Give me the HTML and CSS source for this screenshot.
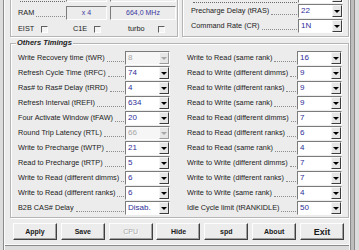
FILE: index.html
```html
<!DOCTYPE html>
<html>
<head>
<meta charset="utf-8">
<link rel="stylesheet" href="styles.css">
</head>
<body>
<div class="window">
  <div class="client">
    <div class="top">
      <div class="group gl">
        <div class="frow"><span class="lbl"></span><span class="dots cut"></span><span class="field"></span><span class="field wide"></span></div>
        <div class="frow"><span class="lbl">RAM</span><span class="dots"></span><span class="field">x 4</span><span class="field wide">664,0 MHz</span></div>
        <div class="checks">
          <div class="chkitem"><span class="lbl w1">EIST</span><span class="chk"></span></div>
          <div class="chkitem"><span class="lbl w2">C1E</span><span class="chk"></span></div>
          <div class="chkitem"><span class="lbl w3">turbo</span><span class="chk"></span></div>
        </div>
      </div>
      <div class="group gr">
        <div class="crow"><span class="lbl"></span><span class="dots cut"></span><div class="combo"><span class="val"></span><span class="btn"></span></div></div>
        <div class="crow"><span class="lbl">Precharge Delay (tRAS)</span><span class="dots"></span><div class="combo"><span class="val">22</span><span class="btn"></span></div></div>
        <div class="crow"><span class="lbl">Command Rate (CR)</span><span class="dots"></span><div class="combo"><span class="val">1N</span><span class="btn"></span></div></div>
      </div>
    </div>

    <fieldset class="others">
      <legend>Others Timings</legend>
      <div class="grid">
        <div class="crow"><span class="lbl">Write Recovery time (tWR)</span><span class="dots"></span><div class="combo dis"><span class="val">8</span><span class="btn"></span></div></div>
        <div class="crow"><span class="lbl">Refresh Cycle Time (tRFC)</span><span class="dots"></span><div class="combo"><span class="val">74</span><span class="btn"></span></div></div>
        <div class="crow"><span class="lbl">Ras# to Ras# Delay (tRRD)</span><span class="dots"></span><div class="combo"><span class="val">4</span><span class="btn"></span></div></div>
        <div class="crow"><span class="lbl">Refresh Interval (tREFI)</span><span class="dots"></span><div class="combo"><span class="val">634</span><span class="btn"></span></div></div>
        <div class="crow"><span class="lbl">Four Activate Window (tFAW)</span><span class="dots"></span><div class="combo"><span class="val">20</span><span class="btn"></span></div></div>
        <div class="crow"><span class="lbl">Round Trip Latency (RTL)</span><span class="dots"></span><div class="combo dis"><span class="val">66</span><span class="btn"></span></div></div>
        <div class="crow"><span class="lbl">Write to Precharge (tWTP)</span><span class="dots"></span><div class="combo"><span class="val">21</span><span class="btn"></span></div></div>
        <div class="crow"><span class="lbl">Read to Precharge (tRTP)</span><span class="dots"></span><div class="combo"><span class="val">5</span><span class="btn"></span></div></div>
        <div class="crow"><span class="lbl">Write to Read (different dimms)</span><span class="dots"></span><div class="combo"><span class="val">6</span><span class="btn"></span></div></div>
        <div class="crow"><span class="lbl">Write to Read (different ranks)</span><span class="dots"></span><div class="combo"><span class="val">6</span><span class="btn"></span></div></div>
        <div class="crow"><span class="lbl">B2B CAS# Delay</span><span class="dots"></span><div class="combo"><span class="val">Disab.</span><span class="btn"></span></div></div>

        <div class="crow"><span class="lbl">Write to Read (same rank)</span><span class="dots"></span><div class="combo"><span class="val">16</span><span class="btn"></span></div></div>
        <div class="crow"><span class="lbl">Read to Write (different dimms)</span><span class="dots"></span><div class="combo"><span class="val">9</span><span class="btn"></span></div></div>
        <div class="crow"><span class="lbl">Read to Write (different ranks)</span><span class="dots"></span><div class="combo"><span class="val">9</span><span class="btn"></span></div></div>
        <div class="crow"><span class="lbl">Read to Write (same rank)</span><span class="dots"></span><div class="combo"><span class="val">9</span><span class="btn"></span></div></div>
        <div class="crow"><span class="lbl">Read to Read (different dimms)</span><span class="dots"></span><div class="combo"><span class="val">7</span><span class="btn"></span></div></div>
        <div class="crow"><span class="lbl">Read to Read (different ranks)</span><span class="dots"></span><div class="combo"><span class="val">6</span><span class="btn"></span></div></div>
        <div class="crow"><span class="lbl">Read to Read (same rank)</span><span class="dots"></span><div class="combo"><span class="val">4</span><span class="btn"></span></div></div>
        <div class="crow"><span class="lbl">Write to Write (different dimms)</span><span class="dots"></span><div class="combo"><span class="val">7</span><span class="btn"></span></div></div>
        <div class="crow"><span class="lbl">Write to Write (different ranks)</span><span class="dots"></span><div class="combo"><span class="val">7</span><span class="btn"></span></div></div>
        <div class="crow"><span class="lbl">Write to Write (same rank)</span><span class="dots"></span><div class="combo"><span class="val">4</span><span class="btn"></span></div></div>
        <div class="crow"><span class="lbl">Idle Cycle limit (tRANKIDLE)</span><span class="dots"></span><div class="combo"><span class="val">50</span><span class="btn"></span></div></div>
      </div>
    </fieldset>

    <div class="buttons">
      <button class="b">Apply</button>
      <button class="b">Save</button>
      <button class="b off">CPU</button>
      <button class="b">Hide</button>
      <button class="b">spd</button>
      <button class="b">About</button>
      <button class="b big">Exit</button>
    </div>
  </div>
</div>
</body>
</html>
```

FILE: styles.css
```css
html, body {
  margin: 0;
  padding: 0;
  background: #ececec;
}

.window {
  width: 359px;
  height: 250px;
  overflow: hidden;
  background: #ececec;
  font-family: "Liberation Sans", Arial, sans-serif;
  color: #222;
  box-shadow:
    inset 3px 0 0 #dcdcdc,
    inset 4px 0 0 #8a8a8a,
    inset 5px 0 0 #fafafa,
    inset -4px 0 0 #dcdcdc,
    inset -5px 0 0 #8a8a8a,
    inset -8px 0 0 #bdbdbd,
    inset -9px 0 0 #8a8a8a,
    inset -10px 0 0 #fafafa,
    inset 0 -4px 0 #dcdcdc,
    inset 0 -5px 0 #8a8a8a,
    inset 0 -6px 0 #fafafa;
}

.client {
  padding-left: 10px;
}

/* ---- group boxes ---- */
.group {
  box-sizing: border-box;
  border: 1px solid #b5b5b5;
  box-shadow: inset 1px 1px 0 #fff, 1px 1px 0 #fff;
}

.top {
  display: flex;
  gap: 4px;
  margin-top: -20px;
}

.gl {
  width: 168px;
  height: 57px;
  padding: 7px 1px 2px 7px;
  display: flex;
  flex-direction: column;
  gap: 4px;
}

.gr {
  width: 167px;
  height: 57px;
  padding: 8px 5px 3px 8px;
  display: flex;
  flex-direction: column;
  gap: 1px;
}

/* ---- text ---- */
.lbl {
  font-size: 7.3px;
  line-height: 14px;
  white-space: nowrap;
  color: #222;
}

.dots {
  flex: 1;
  align-self: flex-end;
  height: 0;
  border-bottom: 1px dotted #8c8c8c;
  margin: 0 1px 3px 2px;
}

.dots.cut {
  border-bottom-color: #6a6a6a;
  margin-bottom: 0;
}

/* ---- static fields ---- */
.frow {
  display: flex;
  height: 14px;
  align-items: center;
}

.field {
  box-sizing: border-box;
  width: 41px;
  height: 14px;
  border: 1px solid;
  border-color: #7b7b7b #fdfdfd #fdfdfd #7b7b7b;
  color: #3a3aa0;
  font-size: 7px;
  line-height: 12px;
  text-align: center;
  white-space: nowrap;
}

.field.wide {
  width: 66px;
  margin-left: 3px;
}

/* ---- checkboxes ---- */
.checks {
  display: grid;
  grid-template-columns: 55px 55px auto;
  height: 10px;
  align-items: center;
}

.chkitem {
  display: flex;
  align-items: center;
}

.chkitem .lbl {
  line-height: 10px;
}

.w1 { width: 23px; }
.w2 { width: 21px; }
.w3 { width: 30px; }

.chk {
  box-sizing: border-box;
  width: 7px;
  height: 7px;
  border: 1px solid;
  border-color: #5f5f5f #fdfdfd #fdfdfd #5f5f5f;
  background: #f4f4f4;
}

/* ---- combo boxes ---- */
.crow {
  display: flex;
  align-items: center;
  height: 14px;
}

.combo {
  flex: none;
  box-sizing: border-box;
  width: 45px;
  height: 14px;
  display: flex;
  border: 1px solid;
  border-color: #7b7b7b #fdfdfd #fdfdfd #7b7b7b;
  background: #fff;
}

.val {
  flex: 1;
  padding-left: 2px;
  font-size: 8px;
  line-height: 12px;
  color: #2e2e98;
  white-space: nowrap;
  overflow: hidden;
}

.btn {
  box-sizing: border-box;
  width: 10px;
  height: 12px;
  border: 1px solid;
  border-color: #f6f6f6 #3c3c3c #3c3c3c #f6f6f6;
  background: #e6e6e6;
  display: flex;
  align-items: center;
  justify-content: center;
}

.btn::after {
  content: "";
  width: 0;
  height: 0;
  border-left: 3px solid transparent;
  border-right: 3px solid transparent;
  border-top: 3px solid #000;
}

.combo.dis {
  background: #f6f6f6;
}

.combo.dis .val {
  color: #a6a6a6;
}

.combo.dis .btn {
  border-color: #f6f6f6 #9a9a9a #9a9a9a #f6f6f6;
}

.combo.dis .btn::after {
  border-top-color: #a6a6a6;
}

/* ---- others timings ---- */
.others {
  box-sizing: border-box;
  width: 339px;
  min-width: 0;
  margin: 1px 0 0;
  padding: 3px 6px 2px 7px;
  border: 1px solid #b5b5b5;
  box-shadow: inset 1px 1px 0 #fff, 1px 1px 0 #fff;
}

.others legend {
  font-size: 7.5px;
  line-height: 10px;
  font-weight: bold;
  font-style: italic;
  color: #222;
  padding: 0 1px;
  margin-left: -2px;
  background: #ececec;
}

.grid {
  display: grid;
  grid-template-columns: 152px 155px;
  column-gap: 17px;
  grid-template-rows: repeat(11, 14px);
  row-gap: 1px;
  grid-auto-flow: column;
}

/* ---- buttons ---- */
.buttons {
  display: flex;
  justify-content: space-between;
  width: 331px;
  margin: 5px 0 0 3px;
}

.b {
  box-sizing: border-box;
  width: 44px;
  height: 17px;
  padding: 0;
  margin: 0;
  border: 1px solid;
  border-color: #fdfdfd #404040 #404040 #fdfdfd;
  box-shadow: inset -1px -1px 0 #a0a0a0;
  background: #ececec;
  font-family: "Liberation Sans", Arial, sans-serif;
  font-size: 7px;
  font-weight: bold;
  color: #1a1a1a;
}

.b.off {
  font-weight: normal;
  color: #a8a8a8;
  text-shadow: 1px 1px 0 #fff;
}

.b.big {
  font-size: 9px;
}
```
